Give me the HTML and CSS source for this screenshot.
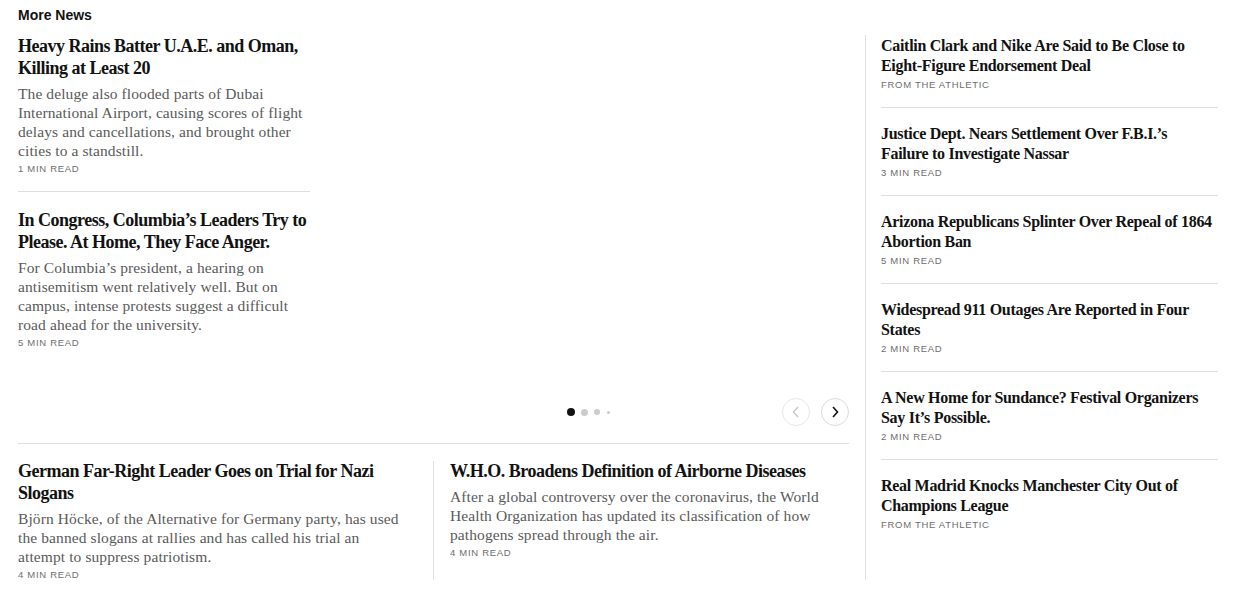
FILE: index.html
```html
<!DOCTYPE html>
<html>
<head>
<meta charset="utf-8">
<link rel="stylesheet" href="styles.css">
</head>
<body>
<div class="page">
  <h2 class="section-title">More News</h2>
  <div class="layout">
    <div class="main">
      <div class="carousel">
        <div class="slides">
          <div class="col">
            <article class="story first">
              <h3 class="hl">Heavy Rains Batter U.A.E. and Oman, Killing at Least 20</h3>
              <p class="summary">The deluge also flooded parts of Dubai International Airport, causing scores of flight delays and cancellations, and brought other cities to a standstill.</p>
              <p class="meta">1 MIN READ</p>
            </article>
            <article class="story second">
              <h3 class="hl">In Congress, Columbia’s Leaders Try to Please. At Home, They Face Anger.</h3>
              <p class="summary">For Columbia’s president, a hearing on antisemitism went relatively well. But on campus, intense protests suggest a difficult road ahead for the university.</p>
              <p class="meta">5 MIN READ</p>
            </article>
          </div>
        </div>
        <div class="controls">
          <div class="dots">
            <span class="dot d1"></span><span class="dot d2"></span><span class="dot d3"></span><span class="dot d4"></span>
          </div>
          <div class="arrows">
            <button class="arrow disabled" aria-label="Previous">
              <svg width="10" height="14" viewBox="0 0 10 14"><path d="M7 2 L2.5 7 L7 12" fill="none" stroke="#c7c7c7" stroke-width="1.4"/></svg>
            </button>
            <button class="arrow" aria-label="Next">
              <svg width="10" height="14" viewBox="0 0 10 14"><path d="M3 2 L7.5 7 L3 12" fill="none" stroke="#121212" stroke-width="1.6"/></svg>
            </button>
          </div>
        </div>
      </div>
      <div class="bottom">
        <div class="bcell">
          <article class="story wide">
            <h3 class="hl">German Far-Right Leader Goes on Trial for Nazi Slogans</h3>
            <p class="summary">Björn Höcke, of the Alternative for Germany party, has used the banned slogans at rallies and has called his trial an attempt to suppress patriotism.</p>
            <p class="meta">4 MIN READ</p>
          </article>
        </div>
        <div class="vdiv"></div>
        <div class="bcell">
          <article class="story wide">
            <h3 class="hl">W.H.O. Broadens Definition of Airborne Diseases</h3>
            <p class="summary">After a global controversy over the coronavirus, the World Health Organization has updated its classification of how pathogens spread through the air.</p>
            <p class="meta">4 MIN READ</p>
          </article>
        </div>
      </div>
    </div>
    <aside class="side">
      <article class="sstory">
        <h3 class="shl">Caitlin Clark and Nike Are Said to Be Close to Eight-Figure Endorsement Deal</h3>
        <p class="meta">FROM THE ATHLETIC</p>
      </article>
      <article class="sstory">
        <h3 class="shl">Justice Dept. Nears Settlement Over F.B.I.’s Failure to Investigate Nassar</h3>
        <p class="meta">3 MIN READ</p>
      </article>
      <article class="sstory">
        <h3 class="shl">Arizona Republicans Splinter Over Repeal of 1864 Abortion Ban</h3>
        <p class="meta">5 MIN READ</p>
      </article>
      <article class="sstory">
        <h3 class="shl">Widespread 911 Outages Are Reported in Four States</h3>
        <p class="meta">2 MIN READ</p>
      </article>
      <article class="sstory">
        <h3 class="shl">A New Home for Sundance? Festival Organizers Say It’s Possible.</h3>
        <p class="meta">2 MIN READ</p>
      </article>
      <article class="sstory last">
        <h3 class="shl">Real Madrid Knocks Manchester City Out of Champions League</h3>
        <p class="meta">FROM THE ATHLETIC</p>
      </article>
    </aside>
  </div>
</div>
</body>
</html>
```

FILE: styles.css
```css
* { box-sizing: border-box; }
html, body { margin: 0; padding: 0; background: #fff; }
body { color: #121212; }

.page {
  padding: 7px 29px 0 18px;
  width: 1247px;
}

.section-title {
  margin: 0;
  font-family: "Liberation Sans", Arial, sans-serif;
  font-weight: 700;
  font-size: 14px;
  line-height: 16px;
  color: #121212;
  height: 28px;
}

.layout {
  display: flex;
}

.main {
  width: 831px;
  padding-right: 16px;
  box-sizing: content-box;
  border-right: 1px solid #dfdfdf;
  height: 545px;
}

.carousel {
  border-bottom: 1px solid #dfdfdf;
  height: 409px;
  display: flex;
  flex-direction: column;
}

.slides { flex: 1; display: flex; }
.col { width: 292px; }

.story.first { padding: 0 0 15px; border-bottom: 1px solid #dfdfdf; }
.story.second { padding-top: 17px; }

.hl {
  margin: 0;
  font-family: "Liberation Serif", "Times New Roman", serif;
  font-weight: 700;
  font-size: 18px;
  line-height: 22px;
  color: #121212;
  letter-spacing: -0.5px;
}

.summary {
  margin: 5px 0 0;
  font-family: "Liberation Serif", Georgia, serif;
  font-size: 15.5px;
  line-height: 19px;
  letter-spacing: 0.1px;
  color: #5a5a5a;
}

.meta {
  margin: 2px 0 0;
  font-family: "Liberation Sans", Arial, sans-serif;
  font-size: 9.5px;
  line-height: 14px;
  letter-spacing: 0.7px;
  color: #6e6e6e;
}

.controls {
  height: 28px;
  margin-bottom: 17px;
  display: flex;
  align-items: center;
  justify-content: flex-end;
}

.dots {
  display: flex;
  align-items: center;
  gap: 6px;
  margin-right: 172px;
}
.dot { display: block; border-radius: 50%; background: #ccc; }
.d1 { width: 8px; height: 8px; background: #121212; }
.d2 { width: 7px; height: 7px; }
.d3 { width: 6px; height: 6px; }
.d4 { width: 3px; height: 3px; margin-left: 1px; }

.arrows { display: flex; gap: 11px; }
.arrow {
  width: 28px; height: 28px;
  border-radius: 50%;
  border: 1px solid #dcdcdc;
  background: #fff;
  padding: 0;
  display: flex; align-items: center; justify-content: center;
}
.arrow.disabled { border-color: #e8e8e8; }

.bottom {
  display: flex;
  padding-top: 16px;
}
.bcell { width: 399px; }
.bcell .story.wide { padding: 0; }
.bcell:first-child .story.wide { width: 390px; }
.vdiv { width: 1px; background: #dfdfdf; margin: 1px 16px 0; height: 120px; }

.side {
  width: 337px;
  margin-left: 15px;
  margin-top: 1px;
}
.sstory {
  padding: 16px 0 15px;
  border-bottom: 1px solid #dfdfdf;
}
.sstory:first-child { padding-top: 0; }
.sstory.last { border-bottom: none; }
.shl {
  margin: 0;
  font-family: "Liberation Serif", "Times New Roman", serif;
  font-weight: 700;
  font-size: 16px;
  line-height: 20px;
  color: #121212;
  letter-spacing: -0.3px;
}
.sstory .meta { margin-top: 2px; }
```
